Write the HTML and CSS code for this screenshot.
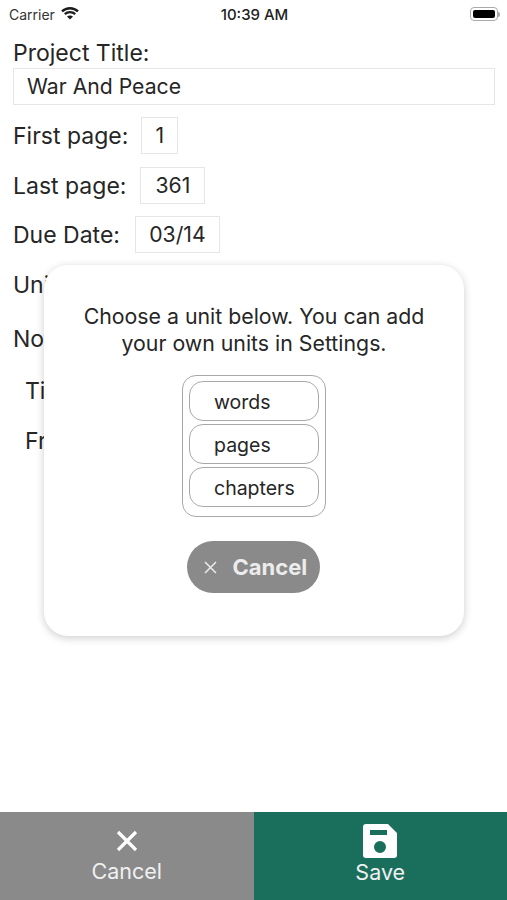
FILE: index.html
```html
<!DOCTYPE html>
<html lang="en">
<head>
  <meta charset="UTF-8">
  <title>Edit Project</title>
  <link rel="stylesheet" href="styles.css">
</head>
<body>

  <div class="screen">
    <div class="status-bar">
      <div class="status-left">
        <span>Carrier</span>
        <svg class="wifi" width="18" height="14" viewBox="0 0 18 14">
          <path d="M1 5.400C3.100 3.400 5.900 2.200 9 2.200s5.900 1.200 8 3.200" fill="none" stroke="#1c1c1c" stroke-width="2.400"/>
          <path d="M3.800 8.100c1.400-1.300 3.200-2 5.200-2s3.800.7 5.200 2" fill="none" stroke="#1c1c1c" stroke-width="2.300"/>
          <path d="M9 13.500 6 10.500c.8-.7 1.900-1.100 3-1.100s2.200.4 3 1.100z" fill="#1c1c1c"/>
        </svg>
      </div>
      <div class="status-time">10:39 AM</div>
      <div class="battery">
        <div class="battery-body"><div class="battery-fill"></div></div>
        <div class="battery-tip"></div>
      </div>
    </div>

    <div class="form">
      <div class="title-label">Project Title:</div>
      <div class="field field-wide">War And Peace</div>

      <div class="row row-first">
        <span class="row-label">First page:</span>
        <div class="field field-first">1</div>
      </div>
      <div class="row">
        <span class="row-label">Last page:</span>
        <div class="field field-last">361</div>
      </div>
      <div class="row row-due">
        <span class="row-label">Due Date:</span>
        <div class="field field-due">03/14</div>
      </div>
      <div class="row">
        <span class="row-label">Unit:</span>
      </div>
      <div class="row row-notes">
        <span class="row-label">Notes:</span>
      </div>
      <div class="row row-sub row-title">
        <span class="row-label">Title</span>
      </div>
      <div class="row row-sub">
        <span class="row-label">From</span>
      </div>
    </div>

    <div class="toolbar">
      <div class="tool tool-cancel">
        <svg width="22" height="22" viewBox="0 0 22 22">
          <path d="M2 2 20 20M20 2 2 20" stroke="#fff" stroke-width="3.200" fill="none"/>
        </svg>
        <span>Cancel</span>
      </div>
      <div class="tool tool-save">
        <svg width="34" height="34" viewBox="0 0 34 34">
          <path fill-rule="evenodd" fill="#fff" d="M3 0h22l9 9v22a3 3 0 0 1-3 3H3a3 3 0 0 1-3-3V3a3 3 0 0 1 3-3zM7 6v5h17V6zM17 17a6 6 0 1 0 0 12 6 6 0 0 0 0-12z"/>
        </svg>
        <span>Save</span>
      </div>
    </div>

    <div class="modal">
      <p class="modal-text">Choose a unit below. You can add your own units in Settings.</p>
      <div class="unit-list">
        <div class="unit">words</div>
        <div class="unit">pages</div>
        <div class="unit">chapters</div>
      </div>
      <div class="modal-cancel">
        <svg width="13" height="13" viewBox="0 0 13 13">
          <path d="M1 1 12 12M12 1 1 12" stroke="#ececec" stroke-width="1.500" fill="none"/>
        </svg>
        <span>Cancel</span>
      </div>
    </div>
  </div>

</body>
</html>
```

FILE: styles.css
```css
* {
  box-sizing: border-box;
}

body {
  margin: 0;
  font-family: Inter, "Liberation Sans", sans-serif;
  background-color: #fff;
  color: #262626;
}

.screen {
  position: relative;
  display: flex;
  flex-direction: column;
  height: 900px;
  overflow: hidden;
}

.status-bar {
  display: flex;
  justify-content: space-between;
  align-items: center;
  height: 28px;
  padding: 0 7px 0 9px;
  font-size: 14px;
}

.status-left {
  display: flex;
  align-items: center;
  gap: 6px;
  width: 120px;
  color: #333;
}

.wifi {
  margin-top: -3px;
}

.status-time {
  font-size: 15px;
  font-weight: 500;
  color: #222;
}

.battery {
  display: flex;
  align-items: center;
  justify-content: flex-end;
  width: 120px;
}

.battery-body {
  width: 28px;
  height: 14px;
  padding: 2px;
  border: 1.500px solid #aaa;
  border-radius: 4px;
}

.battery-fill {
  height: 100%;
  background-color: #000;
  border-radius: 2px;
}

.battery-tip {
  width: 2px;
  height: 5px;
  background-color: #aaa;
  border-radius: 0 2px 2px 0;
}

.form {
  flex: 1;
  padding: 10px 12px 0 13px;
  font-size: 23px;
}

.title-label {
  height: 30px;
  line-height: 30px;
}

.field {
  display: flex;
  align-items: center;
  justify-content: center;
  height: 37px;
  padding-bottom: 1px;
  border: 1.500px solid #e6e6e6;
  font-size: 21.200px;
}

.field-wide {
  justify-content: flex-start;
  padding-left: 13px;
}

.field-first {
  width: 37px;
  margin-left: 1px;
}

.field-last {
  width: 65px;
  margin-left: 2px;
}

.field-due {
  width: 85px;
  margin-left: 3px;
}

.row {
  display: flex;
  align-items: center;
  gap: 12px;
  height: 37px;
  margin-top: 13px;
}

.row-first,
.row-due {
  margin-top: 12px;
}

.row-notes {
  margin-top: 17px;
}

.row-sub {
  padding-left: 12px;
}

.row-title {
  margin-top: 15px;
}

.toolbar {
  display: flex;
  height: 88px;
  font-size: 21.500px;
}

.tool {
  flex: 1;
  display: flex;
  flex-direction: column;
  align-items: center;
  color: #f0f0f0;
}

.tool-cancel {
  background-color: #8a8a8a;
  padding-top: 18px;
  gap: 6px;
}

.tool-save {
  background-color: #1a6e5c;
  padding-top: 12px;
  gap: 1px;
}

.modal {
  position: absolute;
  left: 44px;
  top: 265px;
  width: 420px;
  height: 371px;
  display: flex;
  flex-direction: column;
  align-items: center;
  padding-top: 38px;
  background-color: #fff;
  border-radius: 24px;
  box-shadow: 0 2px 9px rgba(0, 0, 0, 0.2);
}

.modal-text {
  margin: 0;
  width: 370px;
  font-size: 21.300px;
  line-height: 27px;
  text-align: center;
}

.unit-list {
  display: flex;
  flex-direction: column;
  gap: 3px;
  width: 144px;
  height: 142px;
  margin-top: 18px;
  padding: 5px 6px;
  border: 1px solid #a8a8a8;
  border-radius: 14px;
}

.unit {
  display: flex;
  align-items: center;
  height: 40px;
  padding: 1px 0 0 24px;
  font-size: 19.500px;
  border: 1.500px solid #a8a8a8;
  border-radius: 14px;
}

.modal-cancel {
  display: flex;
  align-items: center;
  gap: 16px;
  width: 133px;
  height: 52px;
  margin: 24px 2px 0 0;
  padding-left: 17px;
  background-color: #8a8a8a;
  border-radius: 26px;
  color: #ececec;
  font-size: 22px;
  font-weight: 700;
}
```
